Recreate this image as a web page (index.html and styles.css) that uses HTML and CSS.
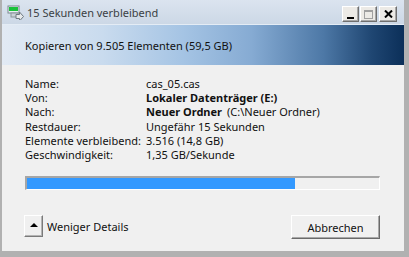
FILE: index.html
```html
<!DOCTYPE html>
<html lang="de">
<head>
  <meta charset="UTF-8">
  <title>15 Sekunden verbleibend</title>
  <link rel="stylesheet" href="styles.css">
</head>
<body>
  <div class="window">
    <div class="titlebar">
      <svg class="app-icon" width="17" height="15" viewBox="0 0 17 15">
        <rect x="1" y="1" width="11" height="7" fill="#e8eef2" stroke="#7b8a90"/>
        <rect x="2" y="2" width="9" height="4" fill="#19c23a"/>
        <rect x="4" y="8" width="7" height="4" fill="#c9d1d6" stroke="#8a969b"/>
        <path d="M9 9.5h3.5v-2.5l4 4.5-4 4.5v-2.5h-3.5z" fill="#e6e9eb" stroke="#6f7a80" stroke-width="1"/>
      </svg>
      <span class="title">15 Sekunden verbleibend</span>
      <div class="caption-buttons">
        <button class="caption-btn"><span class="glyph-min"></span></button>
        <button class="caption-btn" disabled><span class="glyph-max"></span></button>
        <button class="caption-btn close">
          <svg width="9" height="8" viewBox="0 0 9 8"><path d="M1 0.5l7 7M8 0.5l-7 7" stroke="#000" stroke-width="2"/></svg>
        </button>
      </div>
    </div>

    <div class="banner">Kopieren von 9.505 Elementen (59,5 GB)</div>

    <div class="content">
      <div class="details">
        <span>Name:</span><span>cas_05.cas</span>
        <span>Von:</span><span><b>Lokaler Datenträger (E:)</b></span>
        <span>Nach:</span><span><b>Neuer Ordner</b><span class="path">(C:\Neuer Ordner)</span></span>
        <span>Restdauer:</span><span>Ungefähr 15 Sekunden</span>
        <span>Elemente verbleibend:</span><span>3.516 (14,8 GB)</span>
        <span>Geschwindigkeit:</span><span>1,35 GB/Sekunde</span>
      </div>

      <div class="progress">
        <div class="progress-fill" style="width: 76%"></div>
      </div>

      <div class="footer">
        <div class="toggle">
          <button class="toggle-btn"><span class="arrow-up"></span></button>
          <span>Weniger Details</span>
        </div>
        <button class="button">Abbrechen</button>
      </div>
    </div>
  </div>
</body>
</html>
```

FILE: styles.css
```css
* {
  box-sizing: border-box;
  margin: 0;
  padding: 0;
}

body {
  width: 409px;
  height: 257px;
  background-color: #b1b1b1;
  font-family: "Noto Sans", "DejaVu Sans", sans-serif;
  font-size: 11px;
  color: #111;
  overflow: hidden;
}

.window {
  margin: 0 5px 0 2px;
  height: 251px;
  background-color: #f0f0f0;
  display: flex;
  flex-direction: column;
}

.titlebar {
  height: 25px;
  display: flex;
  align-items: center;
  padding: 0 7px 0 5px;
  background: linear-gradient(to bottom, #dbe4ef, #ccd8e6);
  border-bottom: 1px solid #e4ecf5;
}

.app-icon {
  margin-right: 3px;
  margin-top: 1px;
}

.title {
  color: #3b3f44;
  font-size: 11px;
}

.caption-buttons {
  margin-left: auto;
  display: flex;
  gap: 1px;
  align-self: flex-start;
  margin-top: 6px;
}

.caption-btn {
  width: 17px;
  height: 16px;
  background-color: #eceae6;
  border: 1px solid;
  border-color: #ffffff #6f6f6f #6f6f6f #ffffff;
  box-shadow: inset -1px -1px 0 #a8a8a8;
  display: flex;
  align-items: center;
  justify-content: center;
}

.caption-btn.close {
  width: 18px;
  margin-left: 1px;
}

.glyph-min {
  width: 7px;
  height: 2px;
  background-color: #000;
  margin-top: 8px;
}

.glyph-max {
  width: 9px;
  height: 9px;
  border: 1px solid #a0a0a0;
  border-top-width: 2px;
}

.banner {
  height: 40px;
  display: flex;
  align-items: center;
  padding-left: 23px;
  font-size: 11px;
  color: #111;
  background: linear-gradient(to right, #e2eaf4 0%, #c9dbee 25%, #a5c4e4 45%, #86abd3 62%, #4d78a6 80%, #1f4672 92%, #0b2f59 100%);
}

.content {
  flex: 1;
  padding: 12px 24px 0 23px;
  display: flex;
  flex-direction: column;
}

.details {
  display: grid;
  grid-template-columns: 121px 1fr;
  line-height: 14.2px;
  white-space: nowrap;
}

.details b {
  font-weight: bold;
}

.path {
  margin-left: 5px;
}

.progress {
  margin-top: 14px;
  height: 14px;
  border-style: solid;
  border-width: 2px 1px 1px 2px;
  border-color: #a6a6a6 #ffffff #ffffff #a6a6a6;
  background-color: #f0f0f0;
}

.progress-fill {
  height: 100%;
  background-color: #3399ff;
}

.footer {
  margin-top: 25px;
  display: flex;
  align-items: flex-start;
  justify-content: space-between;
}

.toggle {
  display: flex;
  align-items: center;
  gap: 4px;
  margin-left: -1px;
}

.toggle-btn {
  width: 19px;
  height: 22px;
  background-color: #f0f0f0;
  border: 1px solid;
  border-color: #ffffff #7a7a7a #7a7a7a #ffffff;
  box-shadow: inset -1px -1px 0 #b4b4b4;
  display: flex;
  align-items: center;
  justify-content: center;
}

.arrow-up {
  width: 0;
  height: 0;
  border-left: 4px solid transparent;
  border-right: 4px solid transparent;
  border-bottom: 4px solid #000;
  margin-bottom: 3px;
}

.button {
  width: 89px;
  height: 24px;
  font-family: inherit;
  font-size: 11px;
  color: #111;
  background-color: #f0f0f0;
  border: 1px solid;
  border-color: #ffffff #6a6a6a #6a6a6a #ffffff;
  box-shadow: inset -1px -1px 0 #a8a8a8;
}
```
